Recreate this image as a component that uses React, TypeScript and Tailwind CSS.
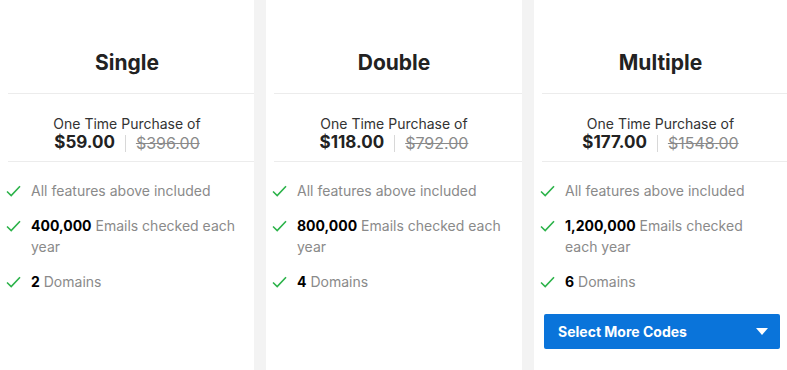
import React from 'react';

interface Plan {
    name: string;
    price: string;
    oldPrice: string;
    emails: string;
    domains: string;
    button?: boolean;
}

const plans: Plan[] = [
    { name: 'Single', price: '$59.00', oldPrice: '$396.00', emails: '400,000', domains: '2' },
    { name: 'Double', price: '$118.00', oldPrice: '$792.00', emails: '800,000', domains: '4' },
    { name: 'Multiple', price: '$177.00', oldPrice: '$1548.00', emails: '1,200,000', domains: '6', button: true },
];

function Check() {
    return (
        <svg width="15" height="12" viewBox="0 0 15 12" className="shrink-0 mt-[5px]">
            <path d="M1 6.5 L5.2 10.5 L14 1.2" fill="none" stroke="#2cb34a" strokeWidth="1.6" />
        </svg>
    );
}

function Feature({ children }: { children: React.ReactNode }) {
    return (
        <li className="flex gap-[10px]">
            <Check />
            <span className="text-[#8a8a8a] leading-[21px]">{children}</span>
        </li>
    );
}

function PlanColumn({ plan }: { plan: Plan }) {
    return (
        <div className="flex-1 bg-white flex flex-col">
            <h2 className="h-[93px] pt-[47px] text-center text-[21px] font-bold text-[#222]">{plan.name}</h2>
            <div className="ml-[8px] -mr-[10px] h-px bg-[#ececec]" />
            <div className="h-[67px] flex flex-col items-center pt-[21px]">
                <div className="text-[14px] text-[#333] leading-[18px]">One Time Purchase of</div>
                <div className="flex items-center h-[20px]">
                    <span className="text-[17px] font-bold text-[#222]">{plan.price}</span>
                    <span className="mx-[10px] w-px h-[17px] bg-[#d8d8d8]" />
                    <span className="text-[16px] text-[#8a8a8a] line-through">{plan.oldPrice}</span>
                </div>
            </div>
            <div className="ml-[8px] -mr-[10px] h-px bg-[#ececec]" />
            <ul className="pl-[6px] pr-[10px] pt-[18px] flex flex-col gap-[14px] text-[14px]">
                <Feature>All features above included</Feature>
                <Feature>
                    <b className="text-black font-bold">{plan.emails}</b> Emails checked each year
                </Feature>
                <Feature>
                    <b className="text-black font-bold">{plan.domains}</b> Domains
                </Feature>
            </ul>
            {plan.button && (
                <button className="mt-[22px] ml-[10px] mr-[7px] h-[35px] rounded-[2px] bg-[#0a74da] text-white text-[14px] font-bold flex items-center justify-between pl-[14px] pr-[12px]">
                    Select More Codes
                    <svg width="12" height="7" viewBox="0 0 12 7">
                        <path d="M0 0 H12 L6 7 Z" fill="white" />
                    </svg>
                </button>
            )}
        </div>
    );
}

export default function App() {
    return (
        <div className="w-[787px] h-[370px] overflow-hidden bg-white flex" style={{ fontFamily: 'Inter, "Open Sans", sans-serif' }}>
            <div className="w-[254px] flex"><PlanColumn plan={plans[0]} /></div>
            <div className="w-[12px] bg-[#f3f3f3]" />
            <div className="w-[256px] flex"><PlanColumn plan={plans[1]} /></div>
            <div className="w-[12px] bg-[#f3f3f3]" />
            <div className="flex-1 flex"><PlanColumn plan={plans[2]} /></div>
        </div>
    );
}
